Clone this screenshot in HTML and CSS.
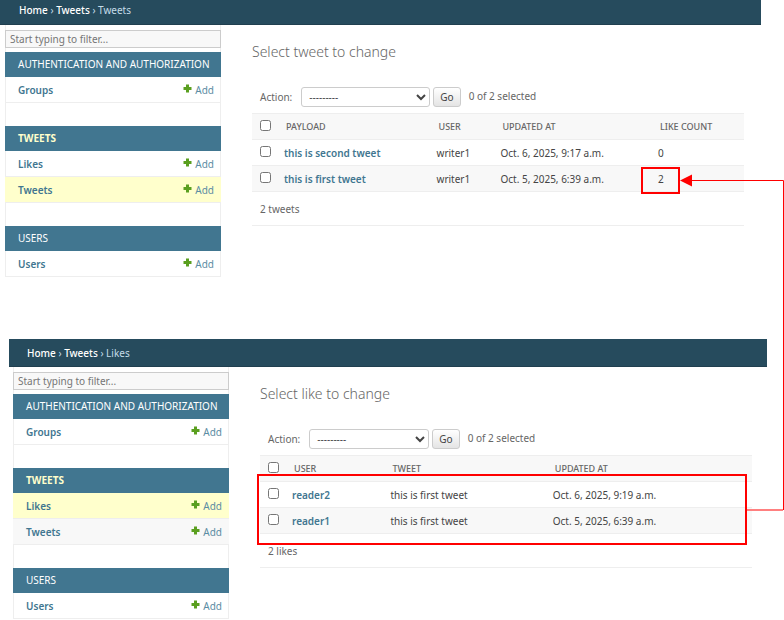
FILE: index.html
```html
<!DOCTYPE html>
<html lang="en">
<head>
<meta charset="utf-8">
<title>Tweets and likes administration</title>
<link rel="stylesheet" href="styles.css">
</head>
<body>
<svg class="defs" aria-hidden="true">
  <symbol id="plus" viewBox="0 0 9 9"><path d="M3 0.500h3v2.500h2.500v3H6v2.500H3V6H0.500V3H3z" fill="#5a9f1f"/></symbol>
</svg>

<section class="panel panel-tweets">
  <nav class="breadcrumbs"><a href="#">Home</a> › <a href="#">Tweets</a> › Tweets</nav>
  <div class="columns">
    <nav class="sidebar">
      <input class="filter" type="search" placeholder="Start typing to filter..." aria-label="Filter navigation items">
      <div class="module">
        <h2>AUTHENTICATION AND AUTHORIZATION</h2>
        <div class="item"><a class="model" href="#">Groups</a><a class="add" href="#"><svg><use href="#plus"/></svg>Add</a></div>
      </div>
      <div class="module">
        <h2 class="active">TWEETS</h2>
        <div class="item"><a class="model" href="#">Likes</a><a class="add" href="#"><svg><use href="#plus"/></svg>Add</a></div>
        <div class="item current"><a class="model" href="#">Tweets</a><a class="add" href="#"><svg><use href="#plus"/></svg>Add</a></div>
      </div>
      <div class="module">
        <h2>USERS</h2>
        <div class="item"><a class="model" href="#">Users</a><a class="add" href="#"><svg><use href="#plus"/></svg>Add</a></div>
      </div>
    </nav>
    <main class="content">
      <h1>Select tweet to change</h1>
      <div class="actions">
        <label for="tweet-action">Action:</label>
        <select id="tweet-action"><option>---------</option></select>
        <button type="button">Go</button>
        <span class="counter">0 of 2 selected</span>
      </div>
      <table class="tweets">
        <colgroup><col class="check"><col class="payload"><col class="user"><col class="updated"><col></colgroup>
        <thead><tr><th><input type="checkbox" aria-label="Select all tweets"></th><th>PAYLOAD</th><th>USER</th><th>UPDATED AT</th><th>LIKE COUNT</th></tr></thead>
        <tbody>
          <tr><td><input type="checkbox" aria-label="Select second tweet"></td><td><a href="#">this is second tweet</a></td><td>writer1</td><td>Oct. 6, 2025, 9:17 a.m.</td><td>0</td></tr>
          <tr><td><input type="checkbox" aria-label="Select first tweet"></td><td><a href="#">this is first tweet</a></td><td>writer1</td><td>Oct. 5, 2025, 6:39 a.m.</td><td>2</td></tr>
        </tbody>
      </table>
      <p class="total">2 tweets</p>
    </main>
  </div>
</section>

<section class="panel panel-likes">
  <nav class="breadcrumbs"><a href="#">Home</a> › <a href="#">Tweets</a> › Likes</nav>
  <div class="columns">
    <nav class="sidebar">
      <input class="filter" type="search" placeholder="Start typing to filter..." aria-label="Filter navigation items">
      <div class="module">
        <h2>AUTHENTICATION AND AUTHORIZATION</h2>
        <div class="item"><a class="model" href="#">Groups</a><a class="add" href="#"><svg><use href="#plus"/></svg>Add</a></div>
      </div>
      <div class="module">
        <h2 class="active">TWEETS</h2>
        <div class="item current"><a class="model" href="#">Likes</a><a class="add" href="#"><svg><use href="#plus"/></svg>Add</a></div>
        <div class="item"><a class="model" href="#">Tweets</a><a class="add" href="#"><svg><use href="#plus"/></svg>Add</a></div>
      </div>
      <div class="module">
        <h2>USERS</h2>
        <div class="item"><a class="model" href="#">Users</a><a class="add" href="#"><svg><use href="#plus"/></svg>Add</a></div>
      </div>
    </nav>
    <main class="content">
      <h1>Select like to change</h1>
      <div class="actions">
        <label for="like-action">Action:</label>
        <select id="like-action"><option>---------</option></select>
        <button type="button">Go</button>
        <span class="counter">0 of 2 selected</span>
      </div>
      <table class="likes">
        <colgroup><col class="check"><col class="user"><col class="tweet"><col></colgroup>
        <thead><tr><th><input type="checkbox" aria-label="Select all likes"></th><th>USER</th><th>TWEET</th><th>UPDATED AT</th></tr></thead>
        <tbody>
          <tr><td><input type="checkbox" aria-label="Select like by reader2"></td><td><a href="#">reader2</a></td><td>this is first tweet</td><td>Oct. 6, 2025, 9:19 a.m.</td></tr>
          <tr><td><input type="checkbox" aria-label="Select like by reader1"></td><td><a href="#">reader1</a></td><td>this is first tweet</td><td>Oct. 5, 2025, 6:39 a.m.</td></tr>
        </tbody>
      </table>
      <p class="total">2 likes</p>
    </main>
  </div>
</section>

<svg class="annotations" viewBox="0 0 784 620" aria-hidden="true">
  <g fill="none" stroke="#f00" stroke-width="2">
    <rect x="642" y="168" width="37" height="25"/>
    <rect x="258" y="475" width="488" height="69"/>
  </g>
  <path d="M747 510H783" stroke="#ff8080" stroke-width="2"/>
  <path d="M783.500 510V180.500H690" fill="none" stroke="#f00"/>
  <path d="M680 180.500L692 174.500V186.500z" fill="#f00"/>
</svg>
</body>
</html>
```

FILE: styles.css
```css
* { box-sizing: border-box; }

body {
  margin: 0;
  background: #fff;
  color: #444;
  font: 10px/16px "Noto Sans", "Open Sans", sans-serif;
}

a { color: #417690; text-decoration: none; }
.defs { display: none; }

.panel-tweets { margin-right: 23px; }
.panel-likes { margin: 62px 17px 0 9px; }

.breadcrumbs {
  padding: 6px 18px 5px;
  background: #264b5d;
  border-bottom: 1px solid #203f4f;
  color: #c4dce8;
}
.panel-tweets .breadcrumbs { padding: 2px 19px 6px; }
.breadcrumbs a { color: #fff; font-weight: 500; }

.columns { display: flex; gap: 31px; }

.sidebar {
  flex: none;
  width: 216px;
  margin-left: 5px;
  padding-top: 5px;
  box-shadow: inset 1px 0 #eee, inset -1px 0 #eee;
}

.filter {
  display: block;
  width: 100%;
  height: 18px;
  margin-bottom: 4px;
  padding: 0 4px;
  border: 1px solid #ccc;
  border-radius: 0;
  background: #f8f8f8;
  font: inherit;
  appearance: none;
}
.filter::placeholder { color: #757575; }

.module + .module { margin-top: 23px; }
.module h2 {
  margin: 0;
  padding: 4px 0 5px 13px;
  background: #417690;
  color: #fff;
  font-size: 10px;
  line-height: 16px;
  font-weight: 400;
  white-space: nowrap;
}
.module h2.active { color: #ffc; font-weight: 700; }

.item {
  display: flex;
  justify-content: space-between;
  padding: 5px 7px 4px 13px;
  border-bottom: 1px solid #eee;
}
.item:nth-child(odd) { background: #f8f8f8; }
.item.current { background: #ffc; }
.model { font-weight: 600; }
.add { display: flex; gap: 3px; color: #5b8ca3; }
.add svg { width: 9px; height: 9px; margin-top: 2px; }

.panel-likes .sidebar { margin-left: 4px; }

.content {
  flex: 1;
  margin-right: 17px;
  color: #666;
}
.panel-likes .content { margin-right: 15px; }

h1 {
  margin: 17px 0 24px;
  font-size: 14px;
  line-height: 20px;
  font-weight: 300;
}

.actions {
  display: flex;
  align-items: center;
  padding: 0 8px;
  height: 22px;
}
select {
  width: 129px;
  height: 20px;
  margin: 0 3px 0 9px;
  padding: 0 0 0 3px;
  border: 1px solid #ccc;
  border-radius: 3px;
  background: #fff;
  color: #444;
  font: inherit;
}
.panel-likes select { width: 120px; }
button {
  height: 20px;
  padding: 0 6px;
  border: 1px solid #ccc;
  border-radius: 3px;
  background: linear-gradient(#fff, #e4e4e4);
  color: #444;
  font: inherit;
}
.counter { margin: 0 0 2px 8px; }

table {
  width: 100%;
  margin-top: 5px;
  border-collapse: collapse;
  table-layout: fixed;
  color: #444;
}
.check { width: 24px; }
.tweets .payload { width: 31%; }
.tweets .user { width: 13%; }
.tweets .updated { width: 32%; }
.likes .user { width: 20%; }
.likes .tweet { width: 33%; }

th, td {
  height: 26px;
  padding: 0 8px;
  border-bottom: 1px solid #eee;
  text-align: left;
  white-space: nowrap;
}
th {
  padding-left: 10px;
  border-top: 1px solid #eee;
  background: #f8f8f8;
  color: #666;
  font-size: 9px;
  font-weight: 500;
}
th:first-child { padding-left: 8px; }
tbody tr:nth-child(even) { background: #f8f8f8; }
td a { font-weight: 600; }
input[type="checkbox"] {
  display: block;
  width: 11px;
  height: 11px;
  margin: 0 0 3px;
}

.total {
  margin: 0;
  padding: 9px 8px 8px;
  border-bottom: 1px solid #eee;
}

.annotations {
  position: absolute;
  top: 0;
  left: 0;
  width: 784px;
  height: 620px;
  pointer-events: none;
}
```
